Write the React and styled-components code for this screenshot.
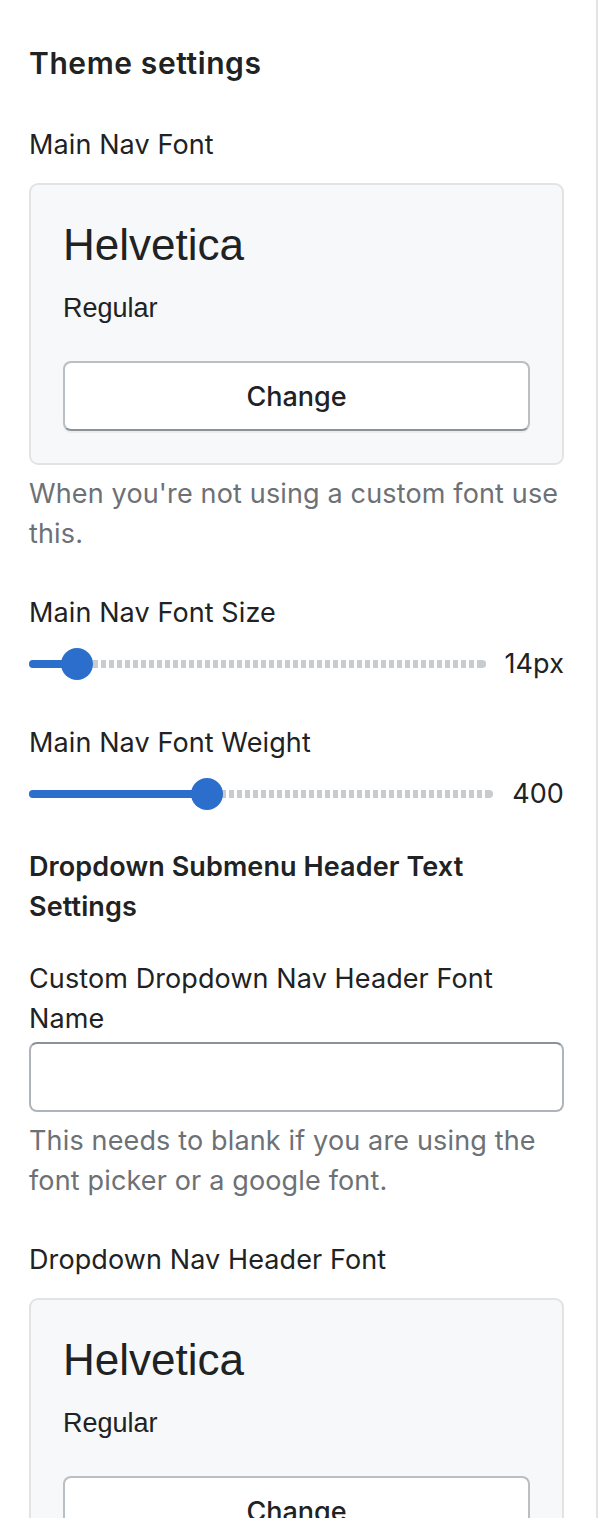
import React from 'react'
import styled, { createGlobalStyle } from 'styled-components'

const GlobalStyle = createGlobalStyle`
  html, body {
    margin: 0;
    padding: 0;
    background: #ffffff;
  }
  body {
    font-family: Inter, 'Noto Sans', sans-serif;
    color: #202223;
    -webkit-font-smoothing: antialiased;
  }
`

const Panel = styled.aside`
  box-sizing: border-box;
  width: 598px;
  min-height: 1518px;
  border-right: 2px solid #e1e3e5;
  padding: 43px 32px 0 29px;
  display: flex;
  flex-direction: column;
`

const Title = styled.h2`
  margin: 0 0 42px 0;
  font-size: 30px;
  line-height: 40px;
  font-weight: 600;
  letter-spacing: 0.6px;
`

const Heading = styled.h3`
  margin: 0 0 32px 0;
  font-size: 27px;
  line-height: 40px;
  font-weight: 600;
  letter-spacing: 0.1px;
`

const Field = styled.div`
  display: flex;
  flex-direction: column;
  margin-bottom: ${props => props.spacing || 39}px;
`

const Label = styled.label`
  font-size: 27px;
  line-height: 40px;
  font-weight: 400;
  letter-spacing: 0.1px;
  margin-bottom: ${props => props.gap || 0}px;
`

const Help = styled.p`
  margin: 9px 0 0 0;
  font-size: 27px;
  line-height: 40px;
  letter-spacing: 0.15px;
  color: #6d7175;
`

const FontCard = styled.div`
  box-sizing: border-box;
  background: #f7f8fa;
  border: 2px solid #e1e3e5;
  border-radius: 9px;
  padding: 32px;
  display: flex;
  flex-direction: column;
`

const FontName = styled.div`
  font-family: 'Liberation Sans', Arial, sans-serif;
  font-size: 44px;
  line-height: 56px;
  color: #202223;
`

const FontStyle = styled.div`
  font-family: 'Liberation Sans', Arial, sans-serif;
  font-size: 27px;
  line-height: 40px;
  margin-top: 15px;
  color: #202223;
`

const ChangeButton = styled.button`
  box-sizing: border-box;
  margin-top: 33px;
  height: 70px;
  width: 100%;
  background: #ffffff;
  border: 2px solid #babfc3;
  border-bottom-color: #8c9196;
  border-radius: 8px;
  box-shadow: 0 2px 1px rgba(0, 0, 0, 0.05);
  font-family: Inter, 'Noto Sans', sans-serif;
  font-size: 27px;
  font-weight: 500;
  color: #202223;
  cursor: pointer;
`

const SliderRow = styled.div`
  display: flex;
  align-items: center;
  gap: 19px;
  height: 32px;
  margin-top: 15px;
`

const Track = styled.div`
  position: relative;
  flex: 1;
  height: 8px;
  border-radius: 4px;
  background: repeating-linear-gradient(
    to right,
    #c9cccf 0,
    #c9cccf 5px,
    transparent 5px,
    transparent 8px
  );
`

const TrackEnd = styled.span`
  position: absolute;
  right: 0;
  top: 0;
  width: 8px;
  height: 8px;
  border-radius: 0 4px 4px 0;
  background: #c9cccf;
`

const Filled = styled.span`
  position: absolute;
  left: 0;
  top: 0;
  height: 8px;
  border-radius: 4px;
  background: #2c6ecb;
`

const Thumb = styled.span`
  position: absolute;
  top: 50%;
  width: 32px;
  height: 32px;
  margin: -16px 0 0 -16px;
  border-radius: 50%;
  background: #2c6ecb;
`

const Value = styled.span`
  font-size: 27px;
  line-height: 40px;
  letter-spacing: 0.1px;
  color: #202223;
`

const TextInput = styled.input`
  box-sizing: border-box;
  width: 100%;
  height: 70px;
  margin-top: 3px;
  border: 2px solid #aeb4b9;
  border-top-color: #8c9196;
  border-radius: 8px;
  background: #ffffff;
  padding: 0 20px;
  font-family: Inter, 'Noto Sans', sans-serif;
  font-size: 27px;
  outline: 0;
`

function FontPicker({ label }) {
  return (
    <>
      <Label gap={18}>{label}</Label>
      <FontCard>
        <FontName>Helvetica</FontName>
        <FontStyle>Regular</FontStyle>
        <ChangeButton type='button'>Change</ChangeButton>
      </FontCard>
    </>
  )
}

function RangeSlider({ label, value, thumbAt, spacing }) {
  return (
    <Field spacing={spacing}>
      <Label>{label}</Label>
      <SliderRow>
        <Track>
          <TrackEnd />
          <Filled style={{ width: thumbAt }} />
          <Thumb style={{ left: thumbAt }} />
        </Track>
        <Value>{value}</Value>
      </SliderRow>
    </Field>
  )
}

export default function App() {
  return (
    <>
      <GlobalStyle />
      <Panel>
        <Title>Theme settings</Title>

        <Field spacing={39}>
          <FontPicker label='Main Nav Font' />
          <Help>When you're not using a custom font use this.</Help>
        </Field>

        <RangeSlider
          label='Main Nav Font Size'
          value='14px'
          thumbAt={48}
          spacing={43}
        />
        <RangeSlider
          label='Main Nav Font Weight'
          value='400'
          thumbAt={178}
          spacing={37}
        />

        <Heading>Dropdown Submenu Header Text Settings</Heading>

        <Field spacing={39}>
          <Label>Custom Dropdown Nav Header Font Name</Label>
          <TextInput type='text' />
          <Help>
            This needs to blank if you are using the font picker or a google
            font.
          </Help>
        </Field>

        <Field>
          <FontPicker label='Dropdown Nav Header Font' />
        </Field>
      </Panel>
    </>
  )
}
